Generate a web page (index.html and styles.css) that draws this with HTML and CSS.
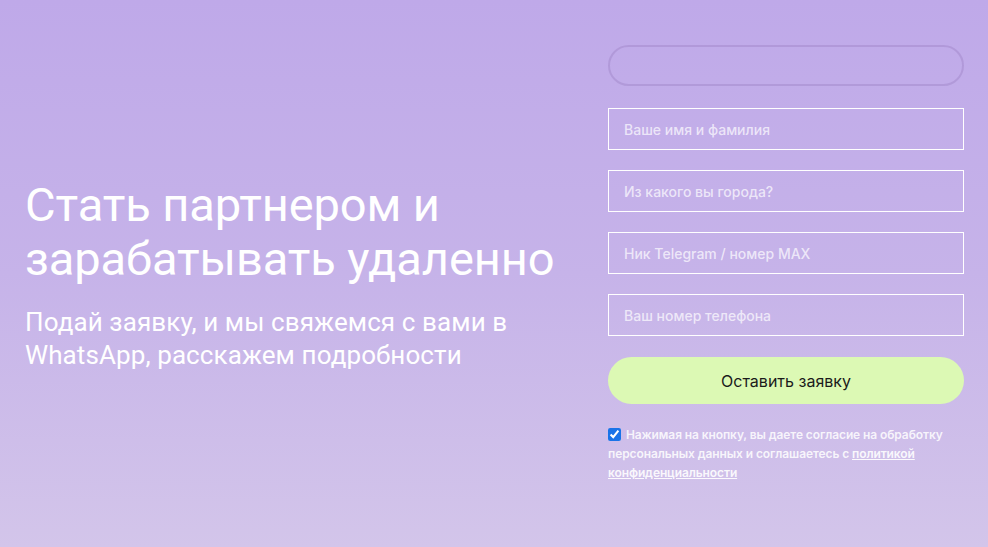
FILE: index.html
```html
<!DOCTYPE html>
<html lang="ru">
<head>
<meta charset="utf-8">
<link rel="stylesheet" href="styles.css">
</head>
<body>
<main class="page">
  <section class="hero">
    <h1 class="title">Стать партнером и<br>зарабатывать удаленно</h1>
    <p class="subtitle">Подай заявку, и мы свяжемся с вами в<br>WhatsApp, расскажем подробности</p>
  </section>
  <form class="form">
    <div class="pill"></div>
    <input class="field" type="text" placeholder="Ваше имя и фамилия">
    <input class="field" type="text" placeholder="Из какого вы города?">
    <input class="field" type="text" placeholder="Ник Telegram / номер MAX">
    <input class="field" type="text" placeholder="Ваш номер телефона">
    <button class="submit" type="button">Оставить заявку</button>
    <label class="consent"><input class="check" type="checkbox" checked> Нажимая на кнопку, вы даете согласие на обработку персональных данных и соглашаетесь с <a class="link" href="#">политикой конфиденциальности</a></label>
  </form>
</main>
</body>
</html>
```
FILE: styles.css
```css
html, body {
  margin: 0;
  padding: 0;
  height: 100%;
}
body {
  background: linear-gradient(180deg, #bfa9e9 0%, #c6b3e9 50%, #d3c5ea 100%);
  font-family: Roboto, "Noto Sans", sans-serif;
  color: #fff;
}
.page {
  display: flex;
  height: 547px;
  box-sizing: border-box;
}
.hero {
  width: 608px;
  box-sizing: border-box;
  padding-left: 25px;
  padding-top: 178px;
}
.title {
  margin: 0;
  font-family: Roboto, sans-serif;
  font-weight: 400;
  font-size: 47px;
  line-height: 54px;
  letter-spacing: -0.1px;
}
.subtitle {
  margin: 20px 0 0;
  font-family: Roboto, sans-serif;
  font-weight: 400;
  font-size: 26px;
  line-height: 33px;
  letter-spacing: 0.1px;
}
.form {
  width: 356px;
  padding-top: 45px;
  display: flex;
  flex-direction: column;
}
.pill {
  height: 41px;
  box-sizing: border-box;
  border: 2px solid rgba(150, 120, 190, 0.35);
  border-radius: 21px;
}
.field {
  margin-top: 22px;
  height: 42px;
  box-sizing: border-box;
  border: 1px solid #fff;
  background: transparent;
  padding: 0 15px;
  font-family: Inter, sans-serif;
  font-size: 14px;
  font-weight: 500;
  color: #fff;
  outline: none;
}
.field + .field {
  margin-top: 20px;
}
.field::placeholder {
  color: rgba(255, 255, 255, 0.7);
}
.submit {
  margin-top: 21px;
  height: 47px;
  border: none;
  border-radius: 24px;
  background: #dcf9b4;
  font-family: Inter, sans-serif;
  font-size: 16px;
  font-weight: 400;
  color: #1b1b1b;
  cursor: pointer;
}
.consent {
  margin-top: 21px;
  font-family: Inter, sans-serif;
  font-size: 12px;
  font-weight: 600;
  line-height: 19px;
  letter-spacing: -0.1px;
  color: rgba(255, 255, 255, 0.85);
}
.check {
  width: 13px;
  height: 13px;
  margin: 0 2px 0 0;
  vertical-align: -2px;
  accent-color: #1a73e8;
}
.link {
  color: rgba(255, 255, 255, 0.9);
  text-decoration: underline;
}
```
